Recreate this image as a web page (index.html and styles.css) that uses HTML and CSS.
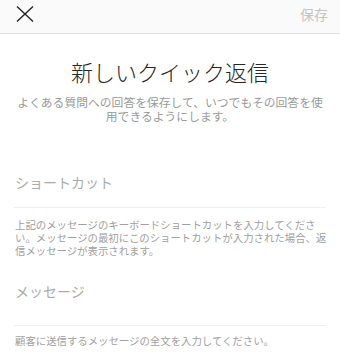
FILE: index.html
```html
<!DOCTYPE html>
<html lang="ja">
<head>
<meta charset="utf-8">
<link rel="stylesheet" href="styles.css">
</head>
<body>
<header class="topbar">
  <svg class="close" width="18" height="16" viewBox="0 0 18 16"><path d="M1 0.5 L17 15.5 M17 0.5 L1 15.5" stroke="#262626" stroke-width="1.4" fill="none"/></svg>
  <span class="save">保存</span>
</header>
<main class="content">
  <h1 class="title">新しいクイック返信</h1>
  <p class="intro">よくある質問への回答を保存して、いつでもその回答を使用できるようにします。</p>
  <section class="field field-short">
    <div class="label">ショートカット</div>
    <p class="help">上記のメッセージのキーボードショートカットを入力してください。メッセージの最初にこのショートカットが入力された場合、返信メッセージが表示されます。</p>
  </section>
  <section class="field field-msg">
    <div class="label">メッセージ</div>
    <p class="help">顧客に送信するメッセージの全文を入力してください。</p>
  </section>
</main>
</body>
</html>
```
FILE: styles.css
```css
* { box-sizing: border-box; }
html, body { margin: 0; padding: 0; background: #fff; }
body {
  font-family: "Noto Sans CJK JP", "Noto Sans", sans-serif;
  width: 340px;
  height: 362px;
  overflow: hidden;
}
.topbar {
  height: 34px;
  background: #fafafa;
  border-bottom: 1px solid #dcdcdc;
  display: flex;
  align-items: center;
  justify-content: space-between;
  padding: 0 12px 1px 16px;
}
.close { display: block; margin-top: -5px; }
.save {
  font-size: 14px;
  color: #c4c4c4;
  line-height: 20px;
  margin-top: -5px;
}
.content { padding: 0 14px; }
.title {
  margin: 22px 0 0;
  font-size: 22px;
  font-weight: 300;
  line-height: 30px;
  color: #262626;
  text-align: center;
}
.intro {
  margin: 9px -1px 0;
  font-size: 11.8px;
  line-height: 14px;
  color: #9a9a9a;
  text-align: center;
}
.field .label {
  font-size: 14px;
  line-height: 20px;
  color: #ababab;
  padding-left: 1px;
  border-bottom: 1px solid #f0f0f0;
}
.field-short { margin-top: 49px; }
.field-short .label { padding-bottom: 15px; }
.field-msg { margin-top: 24px; }
.field-msg .label { padding-bottom: 24px; }
.help {
  margin: 10px -4px 0 0;
  font-size: 10.4px;
  line-height: 13px;
  color: #a0a0a0;
  padding-left: 1px;
}
.field-msg .help { margin-top: 8px; }
```
